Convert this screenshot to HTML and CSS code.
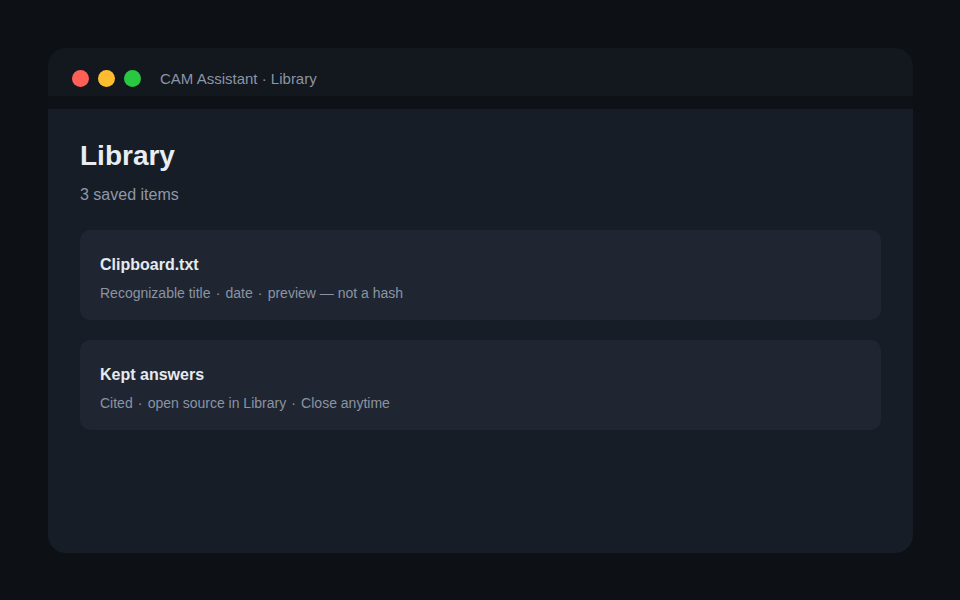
FILE: index.html
```html
<!DOCTYPE html>
<html>
<head>
<meta charset="utf-8">
<link rel="stylesheet" href="styles.css">
</head>
<body>
<div class="window">
  <div class="titlebar">
    <div class="dots">
      <span class="dot red"></span>
      <span class="dot yellow"></span>
      <span class="dot green"></span>
    </div>
    <span class="wtitle">CAM Assistant · Library</span>
  </div>
  <div class="content">
    <h1 class="heading">Library</h1>
    <p class="sub">3 saved items</p>
    <div class="cards">
      <div class="card">
        <div class="card-title">Clipboard.txt</div>
        <div class="card-desc">Recognizable title <span class="sep">·</span> date <span class="sep">·</span> preview — not a hash</div>
      </div>
      <div class="card">
        <div class="card-title">Kept answers</div>
        <div class="card-desc">Cited <span class="sep">·</span> open source in Library <span class="sep">·</span> Close anytime</div>
      </div>
    </div>
  </div>
</div>
</body>
</html>
```
FILE: styles.css
```css
html, body {
  margin: 0;
  padding: 0;
}
body {
  width: 960px;
  height: 600px;
  background: #0d1014;
  font-family: "Liberation Sans", Arial, sans-serif;
  padding: 48px;
  box-sizing: border-box;
}
.window {
  width: 865px;
  height: 505px;
  border-radius: 18px;
  overflow: hidden;
  background: #0e1116;
  display: flex;
  flex-direction: column;
}
.titlebar {
  height: 48px;
  flex: none;
  background: #13171e;
  display: flex;
  align-items: center;
  padding-left: 24px;
  margin-bottom: 13px;
}
.dots {
  display: flex;
  gap: 10px;
  margin-right: 19px;
  margin-top: 13px;
}
.dot {
  width: 17px;
  height: 17px;
  border-radius: 50%;
  display: block;
}
.red { background: #ff5f57; }
.yellow { background: #febc2e; }
.green { background: #28c840; }
.dots .dot + .dot { margin-left: -1px; }
.wtitle {
  font-size: 15px;
  color: #8b95a5;
  margin-top: 12px;
}
.content {
  flex: 1;
  background: #171d26;
  padding: 30px 32px 0 32px;
}
.heading {
  margin: 0;
  font-size: 28px;
  line-height: 34px;
  font-weight: bold;
  color: #e8ecf3;
}
.sub {
  margin: 12px 0 0 0;
  font-size: 16px;
  line-height: 20px;
  color: #8f98a6;
}
.cards {
  margin-top: 25px;
  display: flex;
  flex-direction: column;
  gap: 20px;
}
.card {
  background: #1f2632;
  border-radius: 10px;
  padding: 25px 20px 17px 20px;
  height: 90px;
  box-sizing: border-box;
}
.card-title {
  font-size: 16px;
  line-height: 20px;
  font-weight: bold;
  color: #e6eaf0;
}
.card-desc {
  margin-top: 9px;
  font-size: 14px;
  line-height: 18px;
  color: #8a94a3;
}
.sep {
  margin: 0 1.25px;
}
```
